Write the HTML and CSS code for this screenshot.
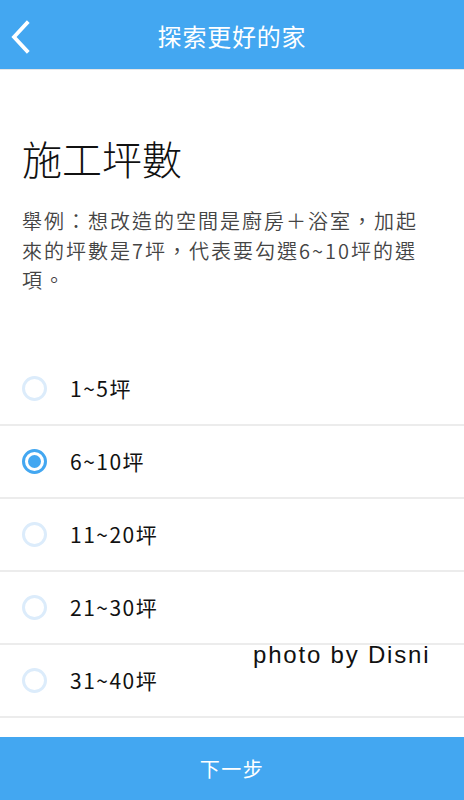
FILE: index.html
```html
<!DOCTYPE html>
<html lang="zh-Hant">
<head>
    <meta charset="UTF-8">
    <meta name="viewport" content="width=device-width, initial-scale=1.0">
    <title>探索更好的家</title>
    <link rel="stylesheet" href="styles.css">
</head>
<body>

<div class="app">
    <header class="top-bar">
        <button class="back-btn" aria-label="返回">
            <svg width="22" height="34" viewBox="0 0 22 34">
                <path d="M17 3 L4 17 L17 31" fill="none" stroke="#fff" stroke-width="3.8" stroke-linecap="square" stroke-linejoin="miter"/>
            </svg>
        </button>
        <h1 class="top-title">探索更好的家</h1>
    </header>

    <main class="content">
        <section class="intro">
            <h2 class="step-title">施工坪數</h2>
            <p class="step-desc">舉例：想改造的空間是廚房＋浴室，加起<br>來的坪數是7坪，代表要勾選6~10坪的選<br>項。</p>
        </section>

        <ul class="option-list">
            <li class="option"><span class="radio"></span><span class="option-text">1~5坪</span></li>
            <li class="option selected"><span class="radio"></span><span class="option-text">6~10坪</span></li>
            <li class="option"><span class="radio"></span><span class="option-text">11~20坪</span></li>
            <li class="option"><span class="radio"></span><span class="option-text">21~30坪</span></li>
            <li class="option"><span class="radio"></span><span class="option-text">31~40坪</span></li>
        </ul>
    </main>

    <footer class="next-bar">
        <span class="next-text">下一步</span>
    </footer>

    <div class="watermark">photo by Disni</div>
</div>

</body>
</html>
```

FILE: styles.css
```css
body {
    margin: 0;
    font-family: "Noto Sans CJK TC", "Noto Sans", sans-serif;
    background: #fff;
}
.app {
    position: relative;
    height: 800px;
    display: flex;
    flex-direction: column;
    overflow: hidden;
}
.top-bar {
    height: 69px;
    flex-shrink: 0;
    background: #43a7f1;
    border-bottom: 1px solid #e6e6e6;
    display: flex;
    align-items: center;
    justify-content: center;
    position: relative;
}
.back-btn {
    position: absolute;
    left: 10px;
    top: 20px;
    padding: 0;
    border: 0;
    background: none;
    display: flex;
}
.top-title {
    margin: 0;
    color: #fff;
    font-size: 24px;
    font-weight: 400;
    letter-spacing: 0.8px;
    padding-top: 2px;
}
.content {
    flex: 1;
    overflow: hidden;
}
.intro {
    padding: 62px 10px 0 22px;
}
.step-title {
    margin: 0;
    font-size: 40px;
    font-weight: 300;
    color: #111;
    line-height: 52px;
}
.step-desc {
    margin: 22px 0 0 0;
    font-size: 20px;
    font-weight: 350;
    letter-spacing: 2px;
    line-height: 29.5px;
    color: #444;
}
.option-list {
    list-style: none;
    margin: 58px 0 0 0;
    padding: 0;
}
.option {
    height: 71px;
    display: flex;
    align-items: center;
    padding-left: 22px;
    border-bottom: 2px solid #ececec;
}
.radio {
    width: 19px;
    height: 19px;
    border: 3px solid #dcecfb;
    border-radius: 50%;
    display: flex;
    align-items: center;
    justify-content: center;
}
.selected .radio {
    border-color: #43a7f1;
}
.selected .radio::after {
    content: "";
    width: 13px;
    height: 13px;
    border-radius: 50%;
    background: #43a7f1;
}
.option-text {
    margin-left: 23px;
    font-size: 21px;
    letter-spacing: 1.5px;
    color: #111;
}
.next-bar {
    height: 63px;
    flex-shrink: 0;
    background: #43a7f1;
    display: flex;
    align-items: center;
    justify-content: center;
}
.next-text {
    color: #fff;
    font-size: 20px;
    letter-spacing: 1.5px;
}
.watermark {
    position: absolute;
    left: 253px;
    top: 641px;
    font-family: "Liberation Sans", Arial, sans-serif;
    font-size: 24px;
    letter-spacing: 1.8px;
    color: #111;
    text-shadow: 1px 1px 0 #fff, -1px -1px 0 #fff, 1px -1px 0 #fff, -1px 1px 0 #fff;
}
```
